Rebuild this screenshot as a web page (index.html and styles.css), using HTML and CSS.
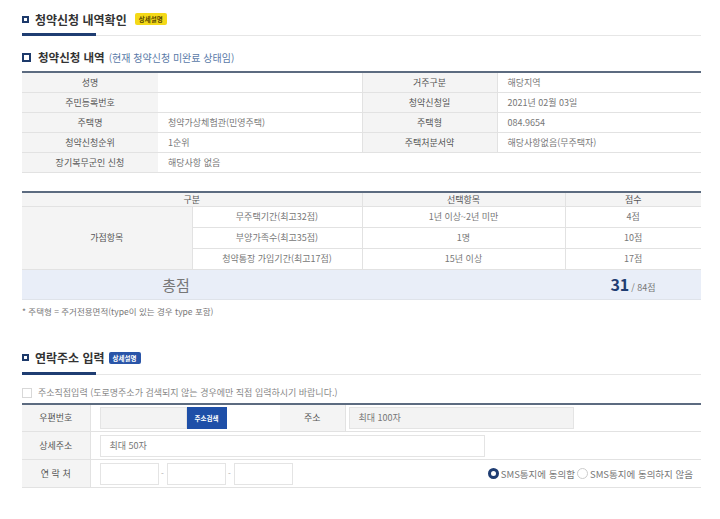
FILE: index.html
```html
<!DOCTYPE html>
<html lang="ko">
  <head>
    <meta charset="UTF-8" />
    <title>청약신청 내역확인</title>
    <link rel="stylesheet" href="styles.css">
  </head>
  <body>
    <div class="page">
      <div class="sec-title">
        <span class="sq"></span>
        <h2>청약신청 내역확인</h2>
        <span class="badge badge--yellow">상세설명</span>
      </div>
      <div class="sec-line"><span></span></div>

      <div class="sub-title">
        <span class="sq sq--big"></span>
        <h3>청약신청 내역</h3>
        <span class="sub-note">(현재 청약신청 미완료 상태임)</span>
      </div>

      <table class="tbl tbl-info">
        <colgroup>
          <col style="width:136px" /><col style="width:204px" /><col style="width:135px" /><col />
        </colgroup>
        <tr><th>성명</th><td></td><th>거주구분</th><td>해당지역</td></tr>
        <tr><th>주민등록번호</th><td></td><th>청약신청일</th><td>2021년 02월 03일</td></tr>
        <tr><th>주택명</th><td>청약가상체험관(민영주택)</td><th>주택형</th><td>084.9654</td></tr>
        <tr><th>청약신청순위</th><td>1순위</td><th>주택처분서약</th><td>해당사항없음(무주택자)</td></tr>
        <tr><th>장기복무군인 신청</th><td colspan="3">해당사항 없음</td></tr>
      </table>

      <table class="tbl tbl-score">
        <colgroup>
          <col style="width:170px" /><col style="width:170px" /><col style="width:203px" /><col />
        </colgroup>
        <tr class="head"><th colspan="2">구분</th><th>선택항목</th><th>점수</th></tr>
        <tr><th rowspan="3">가점항목</th><td>무주택기간(최고32점)</td><td>1년 이상~2년 미만</td><td>4점</td></tr>
        <tr><td>부양가족수(최고35점)</td><td>1명</td><td>10점</td></tr>
        <tr><td>청약통장 가입기간(최고17점)</td><td>15년 이상</td><td>17점</td></tr>
        <tr class="total"><td colspan="2" class="total-label">총점</td><td></td><td class="total-num"><strong>31</strong>/ 84점</td></tr>
      </table>
      <p class="note">* 주택형 = 주거전용면적(type이 있는 경우 type 포함)</p>

      <div class="sec-title sec-title--second">
        <span class="sq"></span>
        <h2>연락주소 입력</h2>
        <span class="badge badge--blue">상세설명</span>
      </div>
      <div class="sec-line"><span></span></div>

      <label class="check-row">
        <span class="check"></span>
        주소직접입력 (도로명주소가 검색되지 않는 경우에만 직접 입력하시기 바랍니다.)
      </label>

      <table class="tbl tbl-addr">
        <colgroup>
          <col style="width:68px" /><col style="width:190px" /><col style="width:65px" /><col />
        </colgroup>
        <tr>
          <th>우편번호</th>
          <td><div class="zip"><span class="inp inp--gray inp--zip"></span><button class="btn-search">주소검색</button></div></td>
          <th>주소</th>
          <td><span class="inp inp--gray inp--addr">최대 100자</span></td>
        </tr>
        <tr>
          <th>상세주소</th>
          <td colspan="3"><span class="inp inp--detail">최대 50자</span></td>
        </tr>
        <tr>
          <th>연 락 처</th>
          <td colspan="3">
            <div class="phone-row">
              <div class="phone">
                <span class="inp inp--tel"></span><span class="dash">-</span>
                <span class="inp inp--tel"></span><span class="dash">-</span>
                <span class="inp inp--tel"></span>
              </div>
              <div class="radios">
                <span class="radio radio--on"></span>SMS통지에 동의함
                <span class="radio"></span>SMS통지에 동의하지 않음
              </div>
            </div>
          </td>
        </tr>
      </table>
    </div>
  </body>
</html>
```

FILE: styles.css
```css
* {
  box-sizing: border-box;
}

body {
  margin: 0;
  background: #fff;
  font-family: "Noto Sans CJK KR", "Noto Sans", sans-serif;
  color: #666;
}

.page {
  width: 701px;
  padding: 9px 0 0 22px;
}

.sec-title {
  display: flex;
  align-items: center;
  height: 20px;
}

.sec-title h2 {
  margin: 0 8px 0 6px;
  font-size: 12px;
  font-weight: 700;
  color: #333;
}

.sq {
  display: inline-block;
  width: 7px;
  height: 7px;
  border: 2px solid #1d3a6b;
}

.sq--big {
  width: 9px;
  height: 9px;
}

.badge {
  font-size: 6.5px;
  font-weight: 700;
  padding: 2px 4px;
  border-radius: 2px;
  line-height: 8px;
}

.badge--yellow {
  background: #f4d918;
  color: #5a4a00;
}

.badge--blue {
  background: #2a55a8;
  color: #fff;
  margin-left: -4px;
}

.sec-line {
  height: 3px;
  margin-top: 4px;
  border-bottom: 1px solid #e6e6e6;
}

.sec-line span {
  display: block;
  width: 74px;
  height: 3px;
  background: #1f3d72;
}

.sub-title {
  display: flex;
  align-items: center;
  height: 20px;
  margin-top: 11px;
}

.sub-title h3 {
  margin: 0 4px 0 7px;
  font-size: 11.5px;
  font-weight: 700;
  color: #333;
}

.sub-note {
  font-size: 10px;
  color: #5a7aa8;
}

.tbl {
  width: 679px;
  border-collapse: collapse;
  border-top: 2px solid #5c6b80;
  table-layout: fixed;
  font-size: 9px;
}

.tbl th,
.tbl td {
  border-bottom: 1px solid #e2e2e2;
  padding: 0;
  font-weight: 400;
}

.tbl th {
  background: #f4f4f4;
  color: #555;
  text-align: center;
}

.tbl-info {
  margin-top: 4px;
}

.tbl-info tr {
  height: 20px;
}

.tbl-info td {
  padding-left: 10px;
  color: #777;
}

.tbl-info th + td + th {
  border-left: 1px solid #e2e2e2;
}

.tbl-info td + th + td {
  border-left: 1px solid #e2e2e2;
}

.tbl-score {
  margin-top: 18px;
}

.tbl-score tr {
  height: 21px;
}

.tbl-score tr.head {
  height: 14px;
}

.tbl-score td {
  text-align: center;
  color: #777;
  border-left: 1px solid #e2e2e2;
}

.tbl-score tr.head th + th {
  border-left: 1px solid #e2e2e2;
}

.tbl-score tr.total {
  height: 30px;
  background: #e9eef8;
}

.tbl-score tr.total td {
  border-left: 0;
  border-bottom: 1px solid #dfe3ea;
}

.total-label {
  padding-right: 32px !important;
  font-size: 15px;
  color: #333;
}

.total-num {
  color: #777;
  font-size: 9px;
}

.total-num strong {
  font-size: 16px;
  color: #1f3d72;
  font-weight: 700;
  margin-right: 2px;
}

.note {
  margin: 5px 0 0;
  font-size: 8.5px;
  color: #777;
}

.sec-title--second {
  margin-top: 31px;
}

.check-row {
  display: flex;
  align-items: center;
  gap: 6px;
  height: 14px;
  margin-top: 11px;
  font-size: 9px;
  color: #888;
}

.check {
  width: 10px;
  height: 10px;
  border: 1px solid #d8d8d8;
}

.tbl-addr {
  margin-top: 3px;
}

.tbl-addr tr {
  height: 28px;
}

.tbl-addr td {
  padding-left: 9px;
  color: #888;
}

.tbl-addr th + td {
  border-left: 1px solid #e2e2e2;
}

.zip {
  display: flex;
  height: 22px;
}

.inp {
  display: inline-flex;
  align-items: center;
  height: 22px;
  padding-left: 9px;
  border: 1px solid #e4e4e4;
  background: #fff;
  font-size: 9px;
  color: #777;
}

.inp--gray {
  background: #f3f3f3;
}

.inp--zip {
  width: 87px;
}

.btn-search {
  width: 40px;
  height: 22px;
  border: 0;
  background: #1e4fa8;
  color: #fff;
  font-family: inherit;
  font-size: 6.5px;
  font-weight: 700;
  padding: 0;
}

.inp--addr {
  width: 225px;
  margin-left: -6px;
}

.inp--detail {
  width: 385px;
}

.phone-row {
  display: flex;
  align-items: center;
  justify-content: space-between;
  padding-right: 8px;
}

.phone {
  display: flex;
  align-items: center;
}

.inp--tel {
  width: 59px;
}

.dash {
  width: 8px;
  text-align: center;
  font-size: 8px;
  color: #aaa;
}

.radios {
  display: flex;
  align-items: center;
  font-size: 9.5px;
  color: #777;
}

.radio {
  display: inline-block;
  width: 11px;
  height: 11px;
  margin: 0 2px 0 2px;
  border: 1px solid #ccc;
  border-radius: 50%;
}

.radio--on {
  border: 3px solid #1f3d72;
}
```
